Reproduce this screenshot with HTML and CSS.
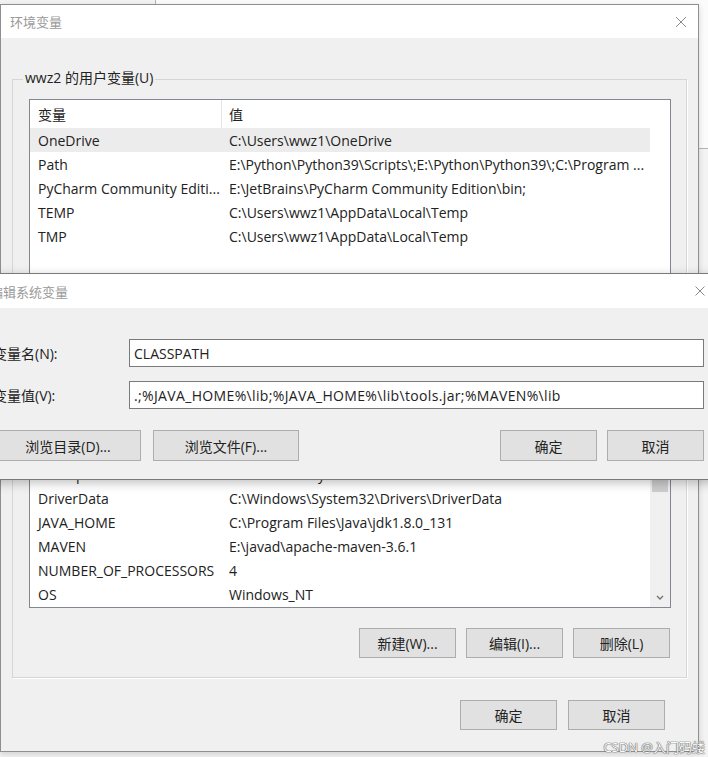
FILE: index.html
```html
<!DOCTYPE html>
<html lang="zh-CN">
<head>
	<meta charset="UTF-8">
	<title>环境变量</title>
	<link rel="stylesheet" href="styles.css">
</head>
<body>
	<div class="back-win"></div>

	<div class="win win-env">
		<div class="titlebar">
			<span class="title">环境变量</span>
			<svg class="close" width="12" height="12" viewBox="0 0 12 12"><path d="M1 1L11 11M11 1L1 11" stroke="#8a8a8a" stroke-width="1" fill="none"/></svg>
		</div>
		<div class="win-body">
			<div class="group group-user">
				<span class="group-label">wwz2 的用户变量(U)</span>
				<div class="list list-user">
					<div class="list-cols">
						<div class="list-head"><div class="c1">变量</div><div class="c2">值</div></div>
						<div class="row sel"><div class="c1">OneDrive</div><div class="c2">C:\Users\wwz1\OneDrive</div></div>
						<div class="row"><div class="c1">Path</div><div class="c2">E:\Python\Python39\Scripts\;E:\Python\Python39\;C:\Program ...</div></div>
						<div class="row"><div class="c1">PyCharm Community Editi...</div><div class="c2">E:\JetBrains\PyCharm Community Edition\bin;</div></div>
						<div class="row"><div class="c1">TEMP</div><div class="c2">C:\Users\wwz1\AppData\Local\Temp</div></div>
						<div class="row"><div class="c1">TMP</div><div class="c2">C:\Users\wwz1\AppData\Local\Temp</div></div>
					</div>
				</div>
			</div>

			<div class="group group-sys">
				<div class="list list-sys">
					<div class="list-cols">
						<div class="list-head"><div class="c1"></div><div class="c2"></div></div>
						<div class="row"><div class="c1">ComSpec</div><div class="c2">C:\Windows\system32\cmd.exe</div></div>
						<div class="row"><div class="c1">DriverData</div><div class="c2">C:\Windows\System32\Drivers\DriverData</div></div>
						<div class="row"><div class="c1">JAVA_HOME</div><div class="c2">C:\Program Files\Java\jdk1.8.0_131</div></div>
						<div class="row"><div class="c1">MAVEN</div><div class="c2">E:\javad\apache-maven-3.6.1</div></div>
						<div class="row"><div class="c1">NUMBER_OF_PROCESSORS</div><div class="c2">4</div></div>
						<div class="row"><div class="c1">OS</div><div class="c2">Windows_NT</div></div>
					</div>
					<div class="vscroll">
						<div class="vs-up"></div>
						<div class="vs-thumb"></div>
						<div class="vs-track"></div>
						<div class="vs-down">
							<svg width="8" height="5" viewBox="0 0 8 5"><path d="M1 1L4 4L7 1" fill="none" stroke="#707070" stroke-width="1.3"/></svg>
						</div>
					</div>
				</div>
				<div class="btn-row">
					<button class="btn">新建(W)...</button>
					<button class="btn">编辑(I)...</button>
					<button class="btn">删除(L)</button>
				</div>
			</div>

			<div class="dlg-btns">
				<button class="btn">确定</button>
				<button class="btn">取消</button>
			</div>
		</div>
	</div>

	<div class="win win-edit">
		<div class="titlebar">
			<span class="title">编辑系统变量</span>
			<svg class="close" width="10" height="10" viewBox="0 0 10 10"><path d="M0.5 0.5L9.5 9.5M9.5 0.5L0.5 9.5" stroke="#8a8a8a" stroke-width="1" fill="none"/></svg>
		</div>
		<div class="edit-body">
			<div class="field">
				<label>变量名(N):</label>
				<div class="input">CLASSPATH</div>
			</div>
			<div class="field">
				<label>变量值(V):</label>
				<div class="input input-value">.;%JAVA_HOME%\lib;%JAVA_HOME%\lib\tools.jar;%MAVEN%\lib</div>
			</div>
			<div class="edit-btns">
				<button class="btn btn-wide">浏览目录(D)...</button>
				<button class="btn btn-wide">浏览文件(F)...</button>
				<div class="spacer"></div>
				<div class="ok-cancel">
					<button class="btn">确定</button>
					<button class="btn">取消</button>
				</div>
			</div>
		</div>
	</div>

	<div class="watermark">CSDN @入门码蝼</div>
</body>
</html>
```
FILE: styles.css
```css
*{
	box-sizing: border-box;
}
body{
	margin: 0;
	width: 708px;
	height: 757px;
	overflow: hidden;
	position: relative;
	background: #f3f3f3;
	font-family: "Open Sans", "Noto Sans CJK SC", sans-serif;
	font-size: 14px;
	color: #222;
}
/* window behind the dialogs */
.back-win{
	position: absolute;
	left: 155px;
	top: -10px;
	width: 600px;
	height: 159px;
	border: 1px solid #b4b4b4;
	background: #fbfbfb;
}
.win{
	position: absolute;
	background: #f0f0f0;
	display: flex;
	flex-direction: column;
}
.win-env{
	left: 0;
	top: 4px;
	width: 699px;
	height: 748px;
	border: 1px solid #8f8f8f;
	box-shadow: 0 2px 6px rgba(0,0,0,0.15);
}
.titlebar{
	flex-shrink: 0;
	height: 33px;
	background: #fff;
	display: flex;
	align-items: center;
	justify-content: space-between;
	padding: 0 11px 0 9px;
}
.title{
	font-size: 13px;
	color: #9a9a9a;
}
.close{
	display: block;
}
.win-body{
	padding: 0 11px;
}
.group{
	position: relative;
	border: 1px solid #d6d6d6;
	box-shadow: 1px 1px 0 #fff;
	padding: 19px 15px 19px 16px;
}
.group-user{
	margin-top: 41px;
	height: 334px;
}
.group-sys{
	margin-top: 0;
}
.group-label{
	position: absolute;
	left: 10px;
	top: -11px;
	line-height: 18px;
	padding: 0 2px;
	background: #f0f0f0;
}
.list{
	display: flex;
	border: 1px solid #828790;
	background: #fff;
	overflow: hidden;
}
.list-user{
	height: 200px;
}
.list-sys{
	height: 175px;
}
.list-cols{
	width: 620px;
	flex-shrink: 0;
}
.list-head{
	display: flex;
	height: 28px;
}
.list-head div{
	display: flex;
	align-items: center;
}
.list-head .c1{
	border-right: 1px solid #e5e5e5;
}
.row{
	display: flex;
	height: 24px;
	align-items: center;
	white-space: nowrap;
}
.row.sel{
	background: #ececec;
}
.c1{
	width: 192px;
	padding-left: 8px;
	overflow: hidden;
	white-space: nowrap;
}
.c2{
	width: 428px;
	padding-left: 7px;
	overflow: hidden;
	white-space: nowrap;
}
.vscroll{
	width: 20px;
	background: #f0f0f0;
	display: flex;
	flex-direction: column;
}
.vs-up{
	height: 17px;
}
.vs-thumb{
	height: 41px;
	margin: 0 2px;
	background: #cdcdcd;
}
.vs-track{
	flex: 1;
}
.vs-down{
	height: 19px;
	display: flex;
	align-items: center;
	justify-content: center;
}
.btn{
	width: 97px;
	height: 30px;
	padding: 0;
	border: 1px solid #adadad;
	background: #e1e1e1;
	font: inherit;
	color: #222;
}
.btn-row{
	display: flex;
	justify-content: flex-end;
	gap: 10px;
	margin-top: 20px;
	padding-right: 1px;
}
.dlg-btns{
	display: flex;
	justify-content: flex-end;
	gap: 11px;
	margin-top: 22px;
	padding-right: 22px;
}
/* edit dialog on top */
.win-edit{
	left: -18px;
	top: 273px;
	width: 734px;
	height: 207px;
	border: 1px solid #7a7a7a;
	box-shadow: 0 3px 10px rgba(0,0,0,0.25);
}
.win-edit .titlebar{
	height: 34px;
	padding: 0 10px 0 7px;
}
.edit-body{
	padding: 31px 11px 0 12px;
}
.field{
	display: grid;
	grid-template-columns: 134px 1fr;
	align-items: center;
}
.field label{
	margin-left: -2px;
}
.field + .field{
	margin-top: 14px;
}
.input{
	height: 28px;
	border: 1px solid #7a7a7a;
	background: #fff;
	padding-left: 4px;
	display: flex;
	align-items: center;
	white-space: nowrap;
	overflow: hidden;
}
.input-value{
	letter-spacing: 0.35px;
}
.edit-btns{
	display: flex;
	gap: 12px;
	margin-top: 21px;
}
.btn-wide{
	width: 146px;
	height: 31px;
}
.spacer{
	flex: 1;
}
.ok-cancel{
	display: flex;
	gap: 10px;
}
.ok-cancel .btn{
	height: 31px;
}
.watermark{
	position: absolute;
	right: 3px;
	top: 737px;
	font-size: 13px;
	color: #fafafa;
	text-shadow: 0 0 1px #666, 0 0 1px #666, 0 0 1px #666;
}
```
